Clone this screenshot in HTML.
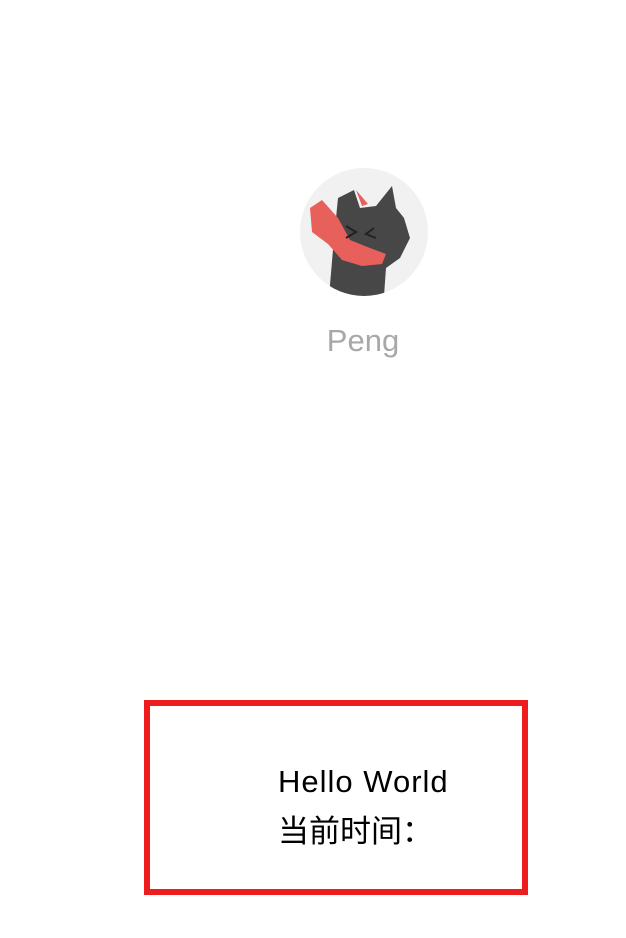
<!DOCTYPE html>
<html><head><meta charset="utf-8"><style>
html,body{margin:0;padding:0;background:#fff;width:626px;height:938px;overflow:hidden;position:relative}
.av{position:absolute;left:300px;top:168px;width:128px;height:128px;border-radius:50%;background:#f1f1f1;overflow:hidden}
.name{position:absolute;left:0;width:726px;top:323px;text-align:center;font:31px "Liberation Sans",sans-serif;color:#a8a8a8}
.box{position:absolute;left:144px;top:700px;width:372px;height:183px;border:6px solid #ee1c1c}
.t{position:absolute;left:278px;font:31px "Liberation Sans","Noto Sans CJK SC",sans-serif;color:#000}
</style></head><body>
<div class="av"><svg width="128" height="128" viewBox="0 0 128 128">
<path d="M28 140 L34 70 L38 30 L54 22 L60 40 L76 38 L92 18 L96 40 L104 50 L110 70 L100 90 L86 100 L84 128 Z" fill="#474747"/>
<path d="M56 22 L62 38 L68 36 Z" fill="#e8605c"/>
<path d="M10 40 L22 32 L38 50 L50 72 L70 80 L86 86 L82 96 L62 98 L42 92 L28 76 L12 64 Z" fill="#e8605c"/>
<path d="M46 58 L56 64 L46 70 M74 60 L66 66 L76 70" stroke="#222" stroke-width="2" fill="none"/>
</svg></div>
<div class="name">Peng</div>
<div class="box"></div>
<div class="t" style="top:764px;letter-spacing:1px">Hello World</div>
<div class="t" style="top:806px">当前时间：</div>
</body></html>
